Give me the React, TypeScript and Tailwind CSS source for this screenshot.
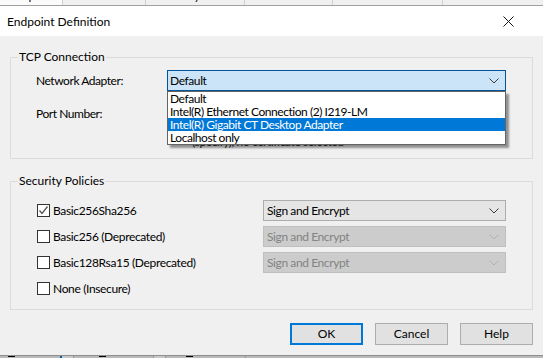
import React from "react";

const FONT = { fontFamily: '"Segoe UI", Lato, "Noto Sans", sans-serif' };

function Chevron({ color = "#3c3c3c" }: { color?: string }) {
  return (
    <svg width="10" height="6" viewBox="0 0 10 6" className="shrink-0">
      <polyline points="0.5,0.5 5,5 9.5,0.5" fill="none" stroke={color} strokeWidth="1" />
    </svg>
  );
}

function Check() {
  return (
    <svg width="11" height="11" viewBox="0 0 11 11">
      <polyline points="1.5,5.5 4,8.5 9.5,1.5" fill="none" stroke="#555" strokeWidth="1.3" />
    </svg>
  );
}

function CheckBox({ checked }: { checked?: boolean }) {
  return (
    <span className="w-[13px] h-[13px] border border-[#333] bg-white flex items-center justify-center shrink-0">
      {checked ? <Check /> : null}
    </span>
  );
}

function PolicyRow({ label, checked, select }: { label: string; checked?: boolean; select?: "on" | "off" }) {
  return (
    <div className="h-[21px] flex items-center">
      <div className="w-[226px] flex items-center gap-[3px]">
        <CheckBox checked={checked} />
        <span className="text-[12px] leading-[14px] tracking-[-0.35px] text-black">{label}</span>
      </div>
      {select === "on" && (
        <div className="w-[243px] h-[21px] bg-[#e5e5e5] border border-[#adadad] flex items-center justify-between pl-[3px] pr-[6px]">
          <span className="text-[12px] leading-[14px] tracking-[-0.4px] text-black">Sign and Encrypt</span>
          <Chevron color="#3c3c3c" />
        </div>
      )}
      {select === "off" && (
        <div className="w-[243px] h-[21px] bg-[#cccccc] border border-[#bfbfbf] flex items-center justify-between pl-[3px] pr-[6px]">
          <span className="text-[12px] leading-[14px] tracking-[-0.4px] text-[#838383]">Sign and Encrypt</span>
          <Chevron color="#b0b0b0" />
        </div>
      )}
    </div>
  );
}

const tabs = [
  { w: 63, t: "r Endpoints", bg: "bg-[#fbfbfb]" },
  { w: 83, t: "Trusted Clients", bg: "bg-[#f0f0f0]" },
  { w: 99, t: "Discovery Servers", bg: "bg-[#f0f0f0]" },
  { w: 88, t: "Trusted Servers", bg: "bg-[#f0f0f0]" },
  { w: 110, t: "Instance Certificates", bg: "bg-[#f0f0f0]" },
];

export default function App() {
  return (
    <div className="w-[543px] h-[358px] overflow-hidden flex flex-col bg-[#f0f0f0] text-black" style={FONT}>
      {/* background tab strip */}
      <div className="h-[6px] shrink-0 flex overflow-hidden border-b border-[#a0a0a0] bg-[#f0f0f0]">
        {tabs.map((tab, i) => (
          <div
            key={i}
            style={{ width: tab.w }}
            className={`shrink-0 h-full border-r border-[#d0d0d0] overflow-hidden flex justify-center ${tab.bg}`}
          >
            <span className="text-[12px] leading-[14px] -mt-[11px] whitespace-nowrap">{tab.t}</span>
          </div>
        ))}
      </div>

      {/* title bar */}
      <div className="h-[30px] shrink-0 bg-white flex items-center justify-between pl-[7px] pr-[29px]">
        <span className="text-[12px] leading-[14px] pt-[1px]">Endpoint Definition</span>
        <svg width="11" height="11" viewBox="0 0 11 11">
          <line x1="0.5" y1="0.5" x2="10.5" y2="10.5" stroke="#111" strokeWidth="1" />
          <line x1="10.5" y1="0.5" x2="0.5" y2="10.5" stroke="#111" strokeWidth="1" />
        </svg>
      </div>

      {/* body */}
      <div className="flex-1 relative pl-[10px] pt-[14px]">
        <fieldset className="w-[523px] h-[109px] border border-[#dcdcdc] relative">
          <legend className="ml-[7px] px-[1px] text-[12px] leading-[14px]">TCP Connection</legend>
          <div className="pl-[25px] pt-[6px] flex flex-col">
            <div className="h-[21px] flex items-center">
              <span className="w-[131px] text-[12px] leading-[14px] tracking-[-0.45px]">Network Adapter:</span>
              <div className="w-[339px] h-[21px] bg-[#cce4f7] border border-[#005499] flex items-center justify-between pl-[2px] pr-[6px]">
                <span className="text-[12px] leading-[14px] tracking-[-0.4px]">Default</span>
                <Chevron color="#3c3c3c" />
              </div>
            </div>
            <div className="h-[21px] mt-[12px] flex items-center">
              <span className="w-[131px] text-[12px] leading-[14px] tracking-[-0.45px]">Port Number:</span>
              <div className="w-[120px] h-[21px] bg-white border border-[#7a7a7a]" />
            </div>
            <div className="mt-[11px] pl-[156px] text-[12px] leading-[14px] tracking-[-0.4px] whitespace-nowrap text-[#222]">
              (specify), no certificate selected
            </div>
          </div>

          {/* open dropdown list */}
          <div className="absolute left-[156px] top-[27px] w-[339px] border border-[#646464] bg-white shadow-[3px_3px_2px_rgba(0,0,0,0.4)] flex flex-col tracking-[-0.45px]">
            <div className="h-[13px] pl-[2px] text-[12px] leading-[13px]">Default</div>
            <div className="h-[13px] pl-[2px] text-[12px] leading-[13px]">Intel(R) Ethernet Connection (2) I219-LM</div>
            <div className="h-[13px] pl-[2px] text-[12px] leading-[13px] bg-[#0078d7] text-white">Intel(R) Gigabit CT Desktop Adapter</div>
            <div className="h-[13px] pl-[2px] text-[12px] leading-[13px]">Localhost only</div>
          </div>
        </fieldset>

        <fieldset className="w-[523px] h-[136px] mt-[15px] border border-[#dcdcdc]">
          <legend className="ml-[7px] px-[1px] text-[12px] leading-[14px]">Security Policies</legend>
          <div className="pl-[26px] pt-[12px] flex flex-col gap-[5px]">
            <PolicyRow label="Basic256Sha256" checked select="on" />
            <PolicyRow label="Basic256 (Deprecated)" select="off" />
            <PolicyRow label="Basic128Rsa15 (Deprecated)" select="off" />
            <PolicyRow label="None (Insecure)" />
          </div>
        </fieldset>

        <div className="w-[523px] mt-[13px] flex justify-end gap-[12px]">
          <button className="w-[73px] h-[22px] bg-[#e1e1e1] border-2 border-[#0078d7] text-[12px] leading-[14px]">OK</button>
          <button className="w-[73px] h-[22px] bg-[#e1e1e1] border border-[#adadad] text-[12px] leading-[14px]">Cancel</button>
          <button className="w-[73px] h-[22px] bg-[#e1e1e1] border border-[#adadad] text-[12px] leading-[14px]">Help</button>
        </div>
      </div>

      {/* bottom strip of window behind */}
      <div className="h-[3px] shrink-0 bg-[#b9b9b9] border-t border-[#8f8f8f] flex">
        <div className="w-[62px] h-full border-r-2 border-[#1060b0] relative">
          <span className="absolute left-[8px] top-0 w-[7px] h-[1px] bg-black" />
        </div>
        <div className="w-[12px] h-full bg-[#c8c8c8] border-r border-[#999]" />
        <div className="w-[80px] h-full border-r border-[#999] relative">
          <span className="absolute left-[25px] top-0 w-[7px] h-[1px] bg-black" />
        </div>
        <div className="w-[12px] h-full bg-[#c8c8c8] border-r border-[#999]" />
        <div className="w-[80px] h-full border-r border-[#999] relative">
          <span className="absolute left-[20px] top-0 w-[7px] h-[1px] bg-black" />
        </div>
      </div>
    </div>
  );
}
